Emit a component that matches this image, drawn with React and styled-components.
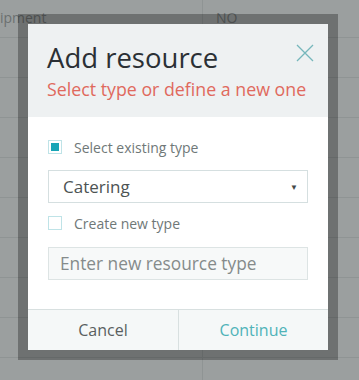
import React from "react";
import styled, { createGlobalStyle } from "styled-components";

const Global = createGlobalStyle`
  html, body { margin: 0; padding: 0; }
  body {
    width: 359px;
    height: 380px;
    overflow: hidden;
    background: #9b9f9f;
    font-family: "Open Sans", Lato, sans-serif;
  }
`;

const Page = styled.div`
  position: relative;
  width: 359px;
  height: 380px;
  overflow: hidden;
`;

const Table = styled.div`
  margin-top: -2px;
  margin-left: -38px;
  display: flex;
  flex-direction: column;
`;

const Row = styled.div`
  display: grid;
  grid-template-columns: 241px 1fr;
  height: 40px;
  border-bottom: 1px solid #8f9494;
  box-sizing: border-box;
`;

const Cell = styled.div`
  display: flex;
  align-items: center;
  padding-left: 13px;
  font-size: 14px;
  color: #6b7070;
  white-space: nowrap;
  border-right: ${(p) => (p.$first ? "1px solid #8f9494" : "none")};
`;

const Frame = styled.div`
  position: absolute;
  left: 18px;
  top: 14px;
  width: 320px;
  height: 346px;
  box-sizing: border-box;
  padding: 10px;
  background: rgba(0, 0, 0, 0.29);
`;

const Modal = styled.div`
  width: 300px;
  height: 326px;
  display: flex;
  flex-direction: column;
  background: #ffffff;
`;

const Header = styled.div`
  position: relative;
  height: 93px;
  box-sizing: border-box;
  background: #eef1f2;
  padding: 16px 19px 0 19px;
`;

const Title = styled.h1`
  margin: 0;
  font-weight: 400;
  font-size: 27.5px;
  line-height: 36px;
  color: #2b3035;
`;

const Subtitle = styled.div`
  margin-top: 1px;
  font-size: 17.8px;
  line-height: 24px;
  color: #e0695d;
  white-space: nowrap;
`;

const Close = styled.button`
  position: absolute;
  right: 14px;
  top: 20px;
  width: 18px;
  height: 18px;
  padding: 0;
  border: none;
  background: none;
  display: flex;
`;

const Body = styled.div`
  flex: 1;
  display: flex;
  flex-direction: column;
  padding: 23px 20px 0 20px;
`;

const CheckRow = styled.label`
  display: flex;
  align-items: center;
  gap: 12px;
  height: 14px;
  font-size: 14px;
  color: #6f7878;
  margin-bottom: ${(p) => p.$mb}px;
`;

const Box = styled.span`
  width: 14px;
  height: 14px;
  box-sizing: border-box;
  border: 1px solid #bfe3e7;
  display: flex;
  align-items: center;
  justify-content: center;
`;

const BoxFill = styled.span`
  width: 8px;
  height: 8px;
  background: #17a5b6;
`;

const SelectBox = styled.div`
  height: 33px;
  box-sizing: border-box;
  border: 1px solid #d5dfe0;
  display: flex;
  align-items: center;
  justify-content: space-between;
  padding: 0 9px 0 14px;
  font-size: 17px;
  color: #4d5353;
  margin-bottom: 13px;
`;

const Arrow = styled.span`
  font-size: 8px;
  color: #444848;
`;

const Input = styled.div`
  height: 33px;
  box-sizing: border-box;
  border: 1px solid #dde4e4;
  background: #f7f9f9;
  display: flex;
  align-items: center;
  padding: 0 11px;
  font-size: 17.3px;
  color: #858b8b;
  white-space: nowrap;
`;

const Footer = styled.div`
  height: 40px;
  display: grid;
  grid-template-columns: 150px 150px;
  border-top: 1px solid #d8e0e0;
  background: #f5f8f8;
`;

const FooterButton = styled.button`
  border: none;
  background: none;
  font-family: inherit;
  font-size: 16px;
  padding: 0;
  color: ${(p) => (p.$primary ? "#4fb3b8" : "#5a5f5f")};
  border-left: ${(p) => (p.$primary ? "1px solid #d8e0e0" : "none")};
`;

export default function App() {
  const rows = [
    ["Equipment", "NO"],
    ["", ""],
    ["", ""],
    ["", ""],
    ["", ""],
    ["", ""],
    ["", ""],
    ["", ""],
    ["", ""],
    ["", ""],
  ];
  return (
    <Page>
      <Global />
      <Table>
        {rows.map((r, i) => (
          <Row key={i}>
            <Cell $first>{r[0]}</Cell>
            <Cell>{r[1]}</Cell>
          </Row>
        ))}
      </Table>
      <Frame>
        <Modal>
          <Header>
            <Title>Add resource</Title>
            <Subtitle>Select type or define a new one</Subtitle>
            <Close aria-label="Close">
              <svg width="18" height="18" viewBox="0 0 18 18">
                <path d="M1 1L17 17M17 1L1 17" stroke="#76b7bb" strokeWidth="1.3" fill="none" />
              </svg>
            </Close>
          </Header>
          <Body>
            <CheckRow $mb={16}>
              <Box>
                <BoxFill />
              </Box>
              Select existing type
            </CheckRow>
            <SelectBox>
              Catering
              <Arrow>▼</Arrow>
            </SelectBox>
            <CheckRow $mb={17}>
              <Box />
              Create new type
            </CheckRow>
            <Input>Enter new resource type</Input>
          </Body>
          <Footer>
            <FooterButton>Cancel</FooterButton>
            <FooterButton $primary>Continue</FooterButton>
          </Footer>
        </Modal>
      </Frame>
    </Page>
  );
}
